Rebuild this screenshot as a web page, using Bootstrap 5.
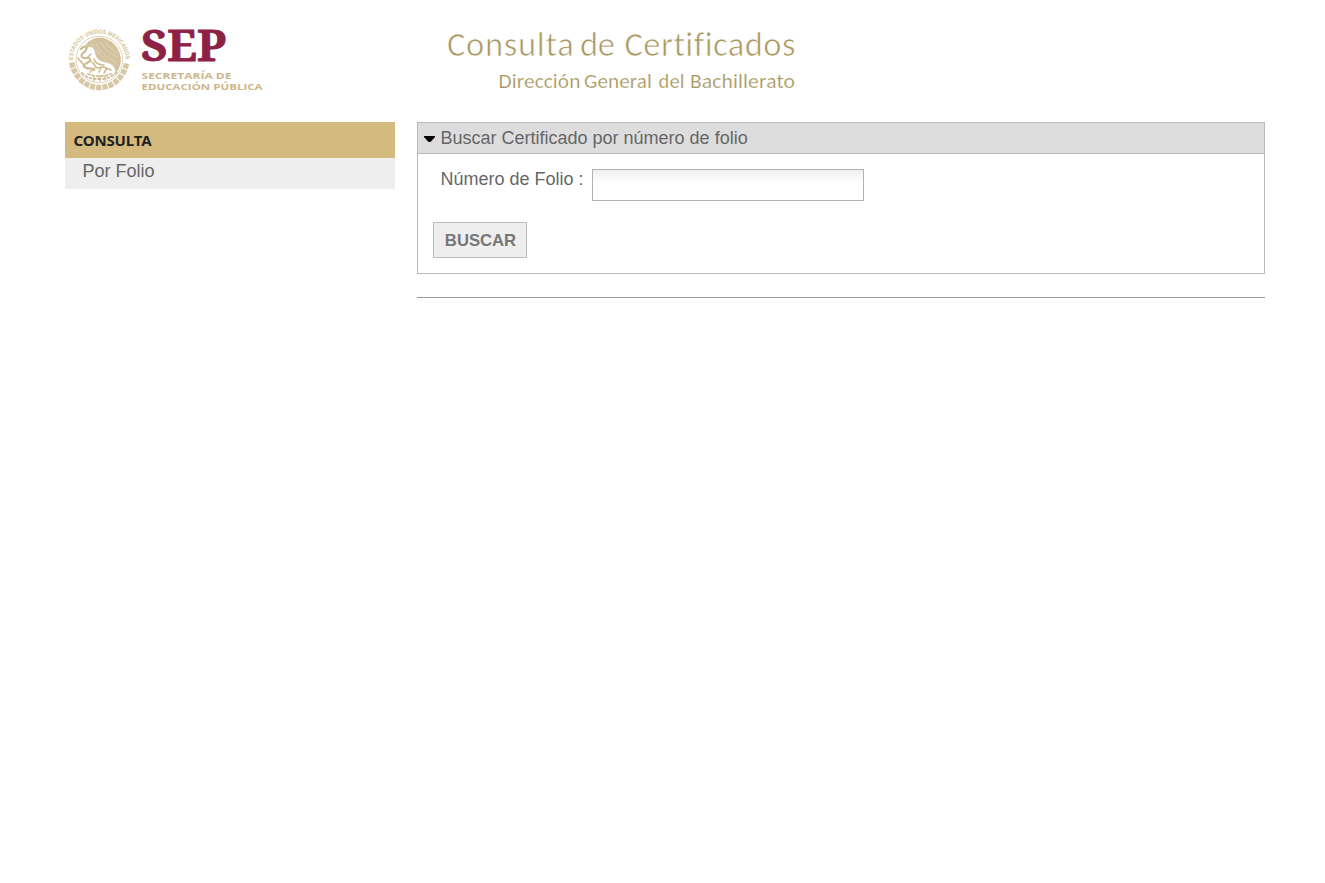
<!DOCTYPE html>
<html lang="es">
<head>
<meta charset="utf-8">
<meta name="viewport" content="width=device-width, initial-scale=1">
<title>Consulta de Certificados</title>
<link href="https://cdn.jsdelivr.net/npm/bootstrap@5.3.0/dist/css/bootstrap.min.css" rel="stylesheet">
<style>
body{font-family:"Liberation Sans",Arial,sans-serif;font-size:18px;line-height:27px;color:#666}
.page{width:1200px;margin-left:65px}
.masthead{height:122px}
.masthead svg{display:block;flex:none}
.heading-art{letter-spacing:.1px;font-variant-ligatures:none}
.side{width:330px}
.side-title{background:#d4ba7f;color:#222;height:36px;padding:0 8.5px;font:700 15px/36px "Noto Sans","Open Sans",sans-serif;letter-spacing:-.15px}
.side-link{background:#eee;height:31px;padding:0 17.5px;color:#666;text-decoration:none;line-height:26px}
.main{width:848px}
.panel{border:1px solid #bbb;height:152px}
.panel-title{height:31px;background:#ddd;border-bottom:1px solid #bbb;padding-left:6px;line-height:30px}
.panel-title svg{margin:13px 5.5px 0 0;flex:none}
.panel-form{padding:15px}
.folio-label{width:151px;line-height:20px;padding-left:7.5px}
.folio{width:272px;height:32px;border:1px solid #b2b2b2;border-radius:0;padding:4px 8px;background:linear-gradient(#eee,#fff 12px)}
.folio:focus{box-shadow:none;border-color:#888}
.search{width:94px;height:36px;margin-top:21px;border:1px solid #bbb;border-radius:0;background:#eee;color:#777;font-weight:700;font-size:16.67px;line-height:34px;padding:1px 0 0 1px}
.rule{border-top:1px solid #999;margin-top:23px}
</style>
</head>
<body>
<div class="page">
<header class="masthead d-flex">
<svg width="352" height="122" viewBox="0 0 352 122" role="img" aria-label="SEP, Secretaría de Educación Pública">
<defs>
<path id="ring" d="M7.800 60A26.500 26.500 0 0 1 60.800 60"/>
</defs>
<g fill="none" stroke="#d9c8a8">
<text fill="#d3bf98" stroke="none" font-family="Liberation Sans,sans-serif" font-size="5.800" font-weight="700"><textPath href="#ring" textLength="82" lengthAdjust="spacingAndGlyphs">ESTADOS UNIDOS MEXICANOS</textPath></text>
<circle cx="34.300" cy="59.500" r="23.300" stroke="#e1d4bb" stroke-width="1"/>
<path d="M6.800 62.500C9 76 20 87.500 34.300 87.500S59.500 76 61.700 62.500" stroke-width="5.500" stroke-dasharray="5.200 1"/>
</g>
<path fill="#d4c29f" d="M23 42c5-4 12-6 18-3 9 3 15 12 15 22-1 6-3 10-6 13 1-5-1-8-5-10-5-2-9-2-12-5-4-4-2-8-5-11-2-2-5-1-8 1 0-3 1-5 3-7z"/>
<g fill="none" stroke="#fff" stroke-width=".6" opacity=".45"><path d="M31 43c3 8 9 14 20 19M36 42c3 7 9 12 17 15M41 42c3 5 7 9 12 11M31 49c4 8 9 12 19 17M25 44l5 2"/></g>
<g fill="none" stroke="#d0bb92" stroke-linecap="round">
<path stroke-width="2.200" d="M16 49c3-4 7-2 5 1-2 4-6 3-4 7 2 3 6-1 8 2 2 4-7 4-6 7 1 4 8 1 10 4"/>
<path stroke-width="1.600" d="M13 58c1 3 4 3 5 6 0 3 3 4 5 5M26 54l-3 3M29 59c1 4 5 6 10 6M27 62l5 6 7-1 7 3M36 67l-2 5M42 68l-3 5M30 68l-5 4"/>
<path stroke-width="1.800" stroke-dasharray="2 2.500" d="M17 73c6 6 11 6 17 6s12-1 18-7M23 74c7 3 15 3 23 0"/>
<path stroke-width="1.300" d="M29 77v4M35 76v5M40 76v4"/>
</g>
<text x="76" y="61" font-family="Noto Serif,Liberation Serif,serif" font-size="43" font-weight="700" fill="#8e2246" stroke="#8e2246" stroke-width=".8" textLength="85" lengthAdjust="spacingAndGlyphs">SEP</text>
<g font-family="Open Sans,Noto Sans,sans-serif" font-size="9.300" font-weight="700" fill="#cdb78a">
<text x="76.500" y="79.300" textLength="90" lengthAdjust="spacingAndGlyphs">SECRETARÍA DE</text>
<text x="76.500" y="90.300" textLength="121" lengthAdjust="spacingAndGlyphs">EDUCACIÓN PÚBLICA</text>
</g>
</svg>
<svg class="heading-art" width="400" height="122" viewBox="0 0 400 122" font-family="Carlito,Lato,sans-serif" fill="#a79760">
<g font-size="34.500" stroke="#fff" stroke-width=".7">
<text x="30" y="56" textLength="127">Consulta</text>
<text x="163" y="56" textLength="35">de</text>
<text x="207.500" y="56" textLength="171">Certificados</text>
</g>
<g font-size="21" stroke="#fff" stroke-width=".2">
<text x="81.500" y="87.500" textLength="82" lengthAdjust="spacingAndGlyphs">Dirección</text>
<text x="167" y="87.500" textLength="68" lengthAdjust="spacingAndGlyphs">General</text>
<text x="241.500" y="87.500" textLength="26" lengthAdjust="spacingAndGlyphs">del</text>
<text x="273" y="87.500" textLength="105" lengthAdjust="spacingAndGlyphs">Bachillerato</text>
</g>
</svg>
</header>
<div class="d-flex justify-content-between align-items-start">
<nav class="side d-flex flex-column">
<div class="side-title">CONSULTA</div>
<a class="side-link" href="#">Por Folio</a>
</nav>
<main class="main">
<section class="panel">
<div class="panel-title d-flex align-items-start"><svg width="11" height="7" viewBox="0 0 11 7"><path d="M0 0h11v1L6.500 6h-2L0 1z"/></svg><span>Buscar Certificado por número de folio</span></div>
<form class="panel-form">
<div class="d-flex align-items-start">
<label for="folio" class="folio-label flex-shrink-0">Número de Folio :</label>
<input id="folio" class="form-control folio ms-2" type="text">
</div>
<button class="btn search d-block" type="button">BUSCAR</button>
</form>
</section>
<div class="rule"></div>
</main>
</div>
</div>
<script src="https://cdn.jsdelivr.net/npm/bootstrap@5.3.0/dist/js/bootstrap.bundle.min.js"></script>
</body>
</html>
